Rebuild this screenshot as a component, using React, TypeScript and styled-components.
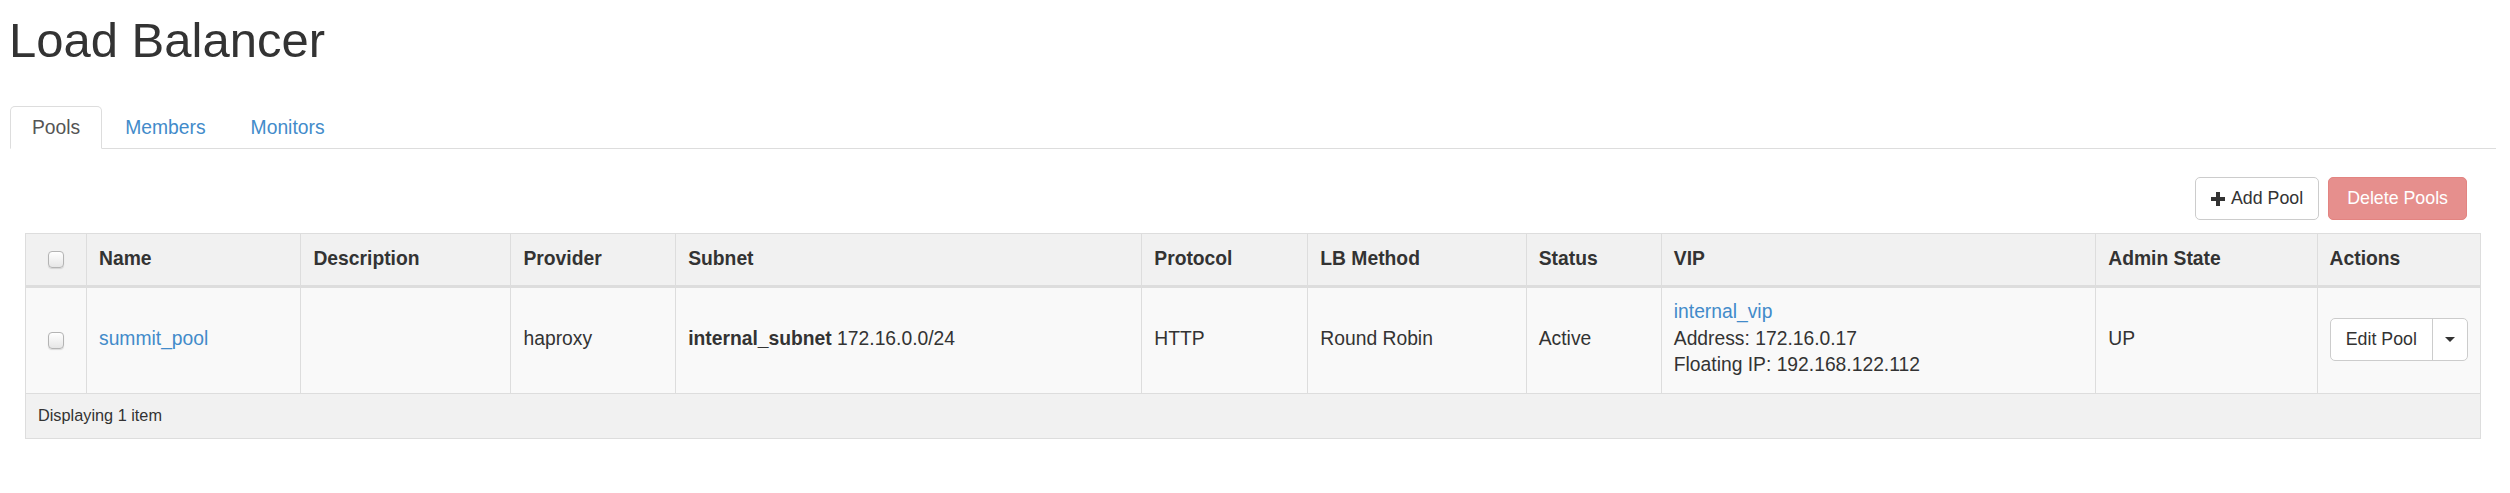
import React from "react";
import styled, { createGlobalStyle } from "styled-components";

const GlobalStyle = createGlobalStyle`
  html, body { margin: 0; padding: 0; background: #fff; }
  body {
    font-family: "Liberation Sans", Helvetica, Arial, sans-serif;
    color: #333;
  }
  * { box-sizing: border-box; }
`;

const Page = styled.div`
  padding: 0 14px 0 10px;
`;

const Title = styled.h1`
  margin: 14px 0 0 -1px;
  font-size: 49px;
  line-height: 53px;
  font-weight: 400;
  color: #333;
`;

const Tabs = styled.ul`
  display: flex;
  list-style: none;
  margin: 39px 0 0;
  padding: 0;
  border-bottom: 1px solid #ddd;
`;

const TabItem = styled.li`
  margin: 0 1px -1px 0;
`;

const TabLink = styled.a<{ $active?: boolean }>`
  display: block;
  padding: 8px 21px 7px;
  font-size: 19.3px;
  line-height: 26px;
  border: 1px solid ${(p) => (p.$active ? "#ddd" : "transparent")};
  border-bottom-color: transparent;
  border-radius: 5px 5px 0 0;
  background: ${(p) => (p.$active ? "#fff" : "transparent")};
  color: ${(p) => (p.$active ? "#555" : "#428bca")};
  text-decoration: none;
  cursor: pointer;
`;

const TabContent = styled.div`
  padding: 0 15px;
`;

const Toolbar = styled.div`
  display: flex;
  justify-content: flex-end;
  gap: 9px;
  margin: 28px 14px 13px 0;
`;

const Button = styled.button<{ $variant?: "default" | "danger" }>`
  display: inline-flex;
  align-items: center;
  gap: 6px;
  height: 43px;
  padding: 0 ${(p) => (p.$variant === "danger" ? "18px" : "15px")};
  font-family: inherit;
  font-size: 17.8px;
  line-height: 25px;
  border-radius: 5px;
  border: 1px solid ${(p) => (p.$variant === "danger" ? "rgb(227,132,129)" : "#ccc")};
  background: ${(p) => (p.$variant === "danger" ? "rgb(230,143,141)" : "#fff")};
  color: ${(p) => (p.$variant === "danger" ? "#fff" : "#333")};
  cursor: pointer;
`;

const Table = styled.table`
  width: 100%;
  border-collapse: collapse;
  table-layout: fixed;
  border: 1px solid #ddd;
  font-size: 19.3px;
  color: #333;
`;

const HeadCell = styled.th`
  background: #f1f1f1;
  padding: 11px 12px 13px;
  line-height: 27px;
  text-align: left;
  font-weight: 700;
  border: 1px solid #ddd;
  border-bottom: 3px solid #ddd;
  white-space: nowrap;
`;

const BodyCell = styled.td`
  background: #f9f9f9;
  padding: 11px 12px 14px;
  line-height: 26.67px;
  border: 1px solid #ddd;
  vertical-align: middle;
  white-space: nowrap;
`;

const CheckCell = styled.td`
  background: #f9f9f9;
  border: 1px solid #ddd;
  vertical-align: middle;
  padding: 0;
`;

const CheckHead = styled.th`
  background: #f1f1f1;
  border: 1px solid #ddd;
  border-bottom: 3px solid #ddd;
  padding: 0;
  vertical-align: middle;
`;

const FooterCell = styled.td`
  background: #f1f1f1;
  padding: 10px 12px 11px;
  font-size: 16.3px;
  line-height: 23px;
  border: 1px solid #ddd;
`;

const Check = styled.input.attrs({ type: "checkbox" })`
  appearance: none;
  -webkit-appearance: none;
  display: block;
  margin: 0 auto;
  width: 16px;
  height: 17px;
  border: 1px solid #b4b4b4;
  border-radius: 4px;
  background: linear-gradient(#ffffff, #e6e6e6);
  box-shadow: 0 1px 1px rgba(0, 0, 0, 0.12);
`;

const Link = styled.a`
  color: #428bca;
  text-decoration: none;
`;

const Strong = styled.strong`
  font-weight: 700;
`;

const Line = styled.div``;

const SplitButton = styled.div`
  display: flex;
  height: 43px;
  border: 1px solid #ccc;
  border-radius: 5px;
  background: #fff;
  font-size: 17.8px;
  color: #333;
`;

const SplitMain = styled.span`
  flex: 1;
  display: flex;
  align-items: center;
  justify-content: center;
`;

const SplitCaret = styled.span`
  width: 35px;
  display: flex;
  align-items: center;
  justify-content: center;
  border-left: 1px solid #ccc;
  &::after {
    content: "";
    border-top: 5.5px solid #333;
    border-left: 5.5px solid transparent;
    border-right: 5.5px solid transparent;
  }
`;

const PlusIcon = () => (
  <svg width="14" height="14" viewBox="0 0 14 14" aria-hidden="true">
    <rect x="5" y="0" width="4" height="14" fill="#333" />
    <rect x="0" y="5" width="14" height="4" fill="#333" />
  </svg>
);

const columns: { label: string; width: number }[] = [
  { label: "", width: 61 },
  { label: "Name", width: 214.4 },
  { label: "Description", width: 210 },
  { label: "Provider", width: 164.7 },
  { label: "Subnet", width: 466 },
  { label: "Protocol", width: 166 },
  { label: "LB Method", width: 218.4 },
  { label: "Status", width: 135 },
  { label: "VIP", width: 434.4 },
  { label: "Admin State", width: 221.3 },
  { label: "Actions", width: 163.3 },
];

export default function App() {
  return (
    <>
      <GlobalStyle />
      <Page>
        <Title>Load Balancer</Title>
        <Tabs>
          <TabItem>
            <TabLink $active>Pools</TabLink>
          </TabItem>
          <TabItem>
            <TabLink>Members</TabLink>
          </TabItem>
          <TabItem>
            <TabLink>Monitors</TabLink>
          </TabItem>
        </Tabs>
        <TabContent>
          <Toolbar>
            <Button>
              <PlusIcon />
              Add Pool
            </Button>
            <Button $variant="danger">Delete Pools</Button>
          </Toolbar>
          <Table>
            <colgroup>
              {columns.map((c, i) => (
                <col key={i} style={{ width: `${c.width}px` }} />
              ))}
            </colgroup>
            <thead>
              <tr>
                <CheckHead>
                  <Check />
                </CheckHead>
                {columns.slice(1).map((c) => (
                  <HeadCell key={c.label}>{c.label}</HeadCell>
                ))}
              </tr>
            </thead>
            <tbody>
              <tr>
                <CheckCell>
                  <Check />
                </CheckCell>
                <BodyCell>
                  <Link>summit_pool</Link>
                </BodyCell>
                <BodyCell></BodyCell>
                <BodyCell>haproxy</BodyCell>
                <BodyCell>
                  <Strong>internal_subnet</Strong> 172.16.0.0/24
                </BodyCell>
                <BodyCell>HTTP</BodyCell>
                <BodyCell>Round Robin</BodyCell>
                <BodyCell>Active</BodyCell>
                <BodyCell>
                  <Line>
                    <Link>internal_vip</Link>
                  </Line>
                  <Line>Address: 172.16.0.17</Line>
                  <Line>Floating IP: 192.168.122.112</Line>
                </BodyCell>
                <BodyCell>UP</BodyCell>
                <BodyCell>
                  <SplitButton>
                    <SplitMain>Edit Pool</SplitMain>
                    <SplitCaret />
                  </SplitButton>
                </BodyCell>
              </tr>
            </tbody>
            <tfoot>
              <tr>
                <FooterCell colSpan={11}>Displaying 1 item</FooterCell>
              </tr>
            </tfoot>
          </Table>
        </TabContent>
      </Page>
    </>
  );
}
